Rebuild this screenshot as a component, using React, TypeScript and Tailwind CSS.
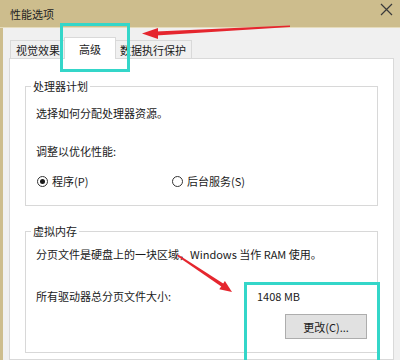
const cjk = "font-['Microsoft_YaHei','Noto_Sans_CJK_SC',sans-serif]";

function Radio({ checked, label }: { checked?: boolean; label: string }) {
  return (
    <label className="flex items-center gap-[4px]">
      <span className="w-[11px] h-[11px] rounded-full border border-[#333] bg-white flex items-center justify-center">
        {checked && <span className="w-[5px] h-[5px] rounded-full bg-[#1a1a1a]" />}
      </span>
      <span>{label}</span>
    </label>
  );
}

function Tab({ label, active, w }: { label: string; active?: boolean; w: string }) {
  if (active) {
    return (
      <div className={`${w} h-[22px] -mb-px -mx-[2px] z-10 relative bg-white border border-b-0 border-[#d9d9d9] flex items-start justify-center pt-[3px]`}>
        {label}
      </div>
    );
  }
  return (
    <div className={`${w} h-[18px] bg-[#f0f0f0] border border-b-0 border-[#d9d9d9] flex items-center justify-center`}>
      {label}
    </div>
  );
}

export default function App() {
  return (
    <div className={`relative w-[400px] h-[360px] overflow-hidden bg-[#cdbd8d] text-[11px] leading-[16px] text-[#1a1a1a] ${cjk}`}>
      {/* title bar */}
      <div className="h-[28px] flex items-center justify-between pl-[10px] pr-[7px] border-b border-[#e6dcbc]">
        <span className="text-[11px] text-[#222]">性能选项</span>
        <svg width="13" height="13" viewBox="0 0 13 13" className="-mt-[8px]">
          <path d="M1 1 L12 12 M12 1 L1 12" stroke="#3a3a3a" strokeWidth="1.2" />
        </svg>
      </div>

      {/* body */}
      <div className="ml-[3px] h-[332px] bg-[#f0f0f0] pt-[9px] pl-[6px] pr-[6px] flex flex-col">
        <div className="flex items-end pl-[1px]">
          <Tab label="视觉效果" w="w-[56px]" />
          <Tab label="高级" w="w-[52px]" active />
          <Tab label="数据执行保护" w="w-[78px]" />
        </div>

        <div className="flex-1 bg-white border border-[#d9d9d9] px-[15px] pt-[19px]">
          <fieldset className="border border-[#d8d8d8] pl-[10px] pr-[10px] pt-[11px] pb-[16px]">
            <legend className="-ml-[5px] px-[2px]">处理器计划</legend>
            <div>选择如何分配处理器资源。</div>
            <div className="mt-[22px]">调整以优化性能:</div>
            <div className="mt-[14px] flex pl-[1px]">
              <div className="w-[135px]">
                <Radio checked label="程序(P)" />
              </div>
              <Radio label="后台服务(S)" />
            </div>
          </fieldset>

          <fieldset className="mt-[17px] border border-[#d8d8d8] pl-[10px] pr-[10px] pt-[7px] pb-[13px]">
            <legend className="-ml-[5px] px-[2px]">虚拟内存</legend>
            <div>分页文件是硬盘上的一块区域，Windows 当作 RAM 使用。</div>
            <div className="mt-[26px] flex">
              <span className="w-[221px]">所有驱动器总分页文件大小:</span>
              <span>1408 MB</span>
            </div>
            <div className="mt-[10px] flex justify-end pr-[0px]">
              <button className="w-[82px] h-[25px] bg-[#e1e1e1] border border-[#adadad] text-[11px] text-[#1a1a1a]">
                更改(C)...
              </button>
            </div>
          </fieldset>
        </div>
      </div>

      {/* annotations */}
      <div className="absolute left-[60px] top-[23px] w-[70px] h-[49px] border-[3px] border-[#34d6c9]" />
      <div className="absolute left-[244px] top-[282px] w-[136px] h-[90px] border-[3px] border-[#34d6c9]" />
      <svg className="absolute left-0 top-0" width="400" height="360" viewBox="0 0 400 360">
        <polygon points="156,31.5 156,35.5 290,27 290,25.5" fill="#e5262e" />
        <polygon points="142,33.5 158,28 158,39" fill="#e5262e" />
        <polygon points="178,254.5 177,256 222,287 224,284" fill="#e5262e" />
        <polygon points="232,292 219.3,289.3 224.9,281.1" fill="#e5262e" />
      </svg>
    </div>
  );
}
